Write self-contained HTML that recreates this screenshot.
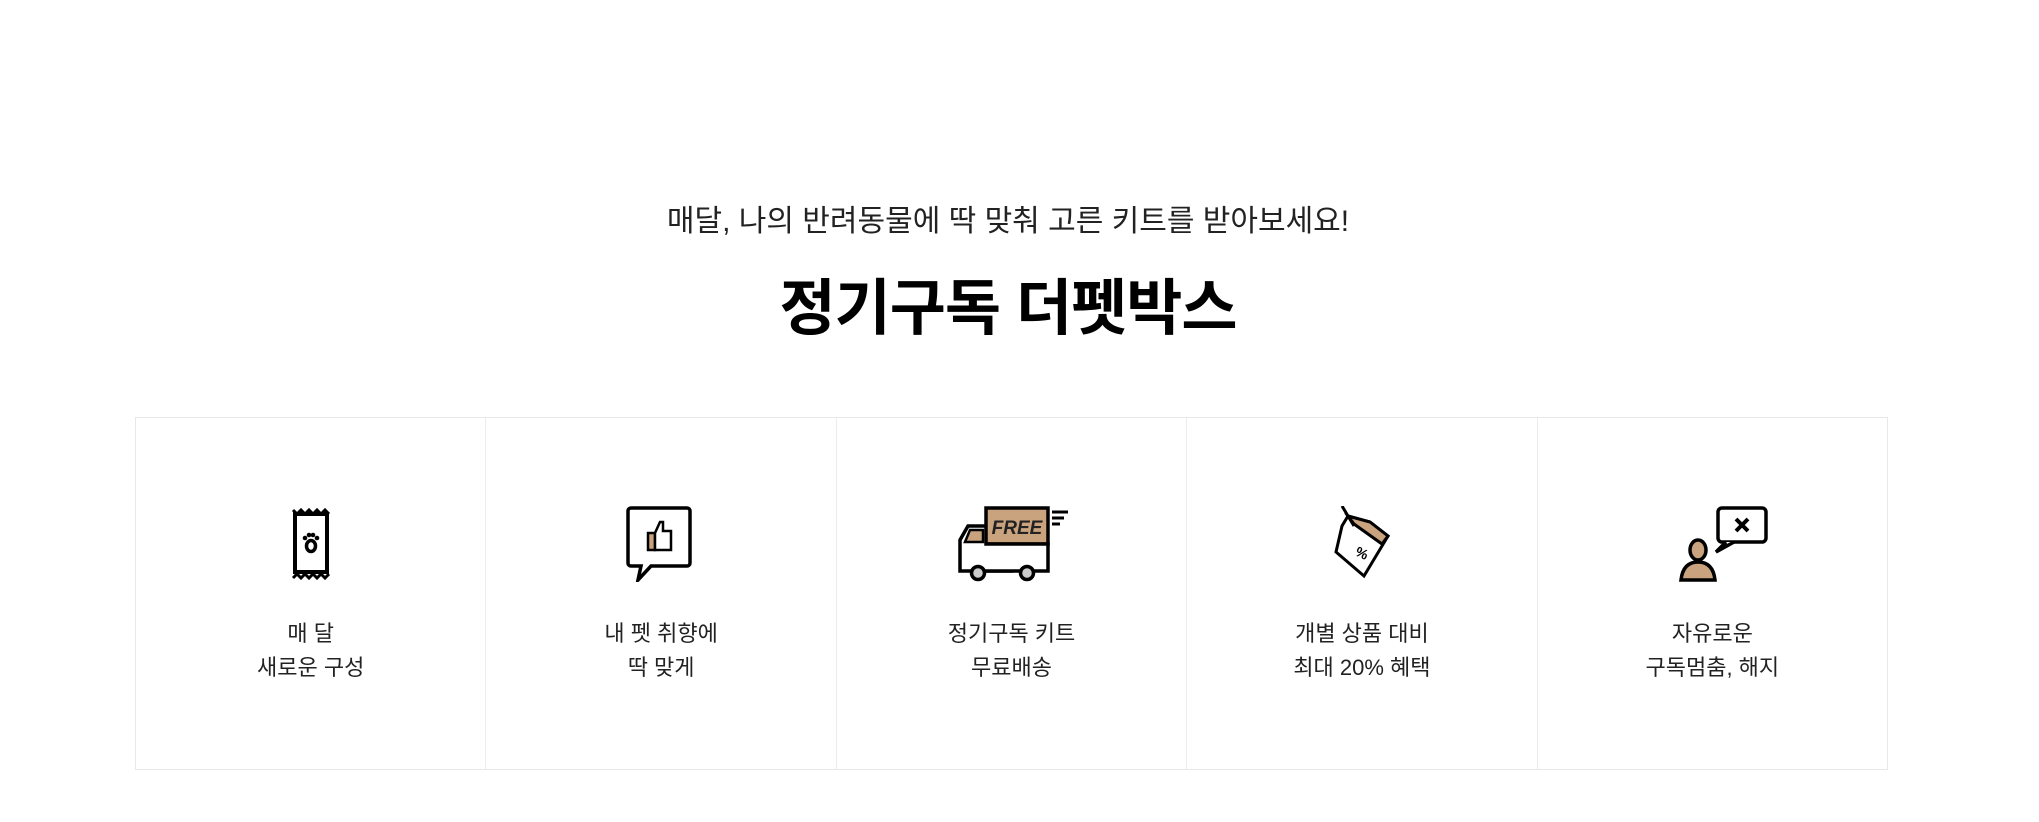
<!DOCTYPE html>
<html><head><meta charset="utf-8">
<style>
*{margin:0;padding:0;box-sizing:border-box}
body{width:2039px;height:822px;background:#fff;font-family:"Liberation Sans","Noto Sans CJK KR",sans-serif;color:#111;position:relative;overflow:hidden}
.sub{position:absolute;top:196px;left:0;width:2016px;text-align:center;font-size:30px;color:#222}
.title{position:absolute;top:258px;left:0;width:2016px;text-align:center;font-size:61px;font-weight:bold;color:#000;letter-spacing:-1px}
.box{position:absolute;left:135px;top:417px;width:1753px;height:353px;border:1.5px solid #e8e8e8;display:flex}
.col{flex:1;border-right:1.5px solid #ececec;position:relative}
.col:last-child{border-right:none}
.ic{position:absolute;left:50%;top:88px;transform:translateX(-50%);width:120px;height:76px}
.lb{position:absolute;top:199px;left:0;width:100%;text-align:center;font-size:22px;line-height:34px;color:#222}
</style></head><body>
<div class="sub">매달, 나의 반려동물에 딱 맞춰 고른 키트를 받아보세요!</div>
<div class="title">정기구독 더펫박스</div>
<div class="box">
<div class="col">
<svg class="ic" viewBox="0 0 120 76"><g fill="none" stroke="#000" stroke-width="4"><rect x="44" y="8" width="32" height="58"/><path d="M42 4 l4 4 4-4 4 4 4-4 4 4 4-4 4 4 4-4 4 4 M42 72 l4-4 4 4 4-4 4 4 4-4 4 4 4-4 4 4 4-4" stroke-width="3"/><ellipse cx="60" cy="40" rx="4.5" ry="5.5" stroke-width="3.5"/></g><circle cx="54" cy="32" r="2.3"/><circle cx="58" cy="29" r="2.3"/><circle cx="62" cy="29" r="2.3"/><circle cx="66" cy="32" r="2.3"/></svg>
<div class="lb">매 달<br>새로운 구성</div></div>
<div class="col">
<svg class="ic" viewBox="0 0 120 76"><path d="M30 2 h56 a3 3 0 0 1 3 3 v52 a3 3 0 0 1-3 3 H50 L37 74 L40 60 H30 a3 3 0 0 1-3-3 V5 a3 3 0 0 1 3-3z" fill="#fff" stroke="#000" stroke-width="3.5"/><rect x="47" y="27" width="7" height="17" fill="#c9a27e" stroke="#000" stroke-width="2.5"/><path d="M54 27 l5-11 h3 v9 h8 v19 h-16z" fill="#fff" stroke="#000" stroke-width="2.5"/></svg>
<div class="lb">내 펫 취향에<br>딱 맞게</div></div>
<div class="col">
<svg class="ic" viewBox="0 0 120 76"><path d="M30 20 h30 v45 H8 V34 l8-14z" fill="#fff" stroke="#000" stroke-width="3.5"/><path d="M13 36 l5-12 h13 v12z" fill="#c9a27e" stroke="#000" stroke-width="2.5"/><rect x="34" y="2" width="62" height="36" fill="#c9a27e" stroke="#000" stroke-width="3.5"/><path d="M34 38 h62 v27 H34" fill="#fff" stroke="#000" stroke-width="3.5"/><text x="65" y="28" text-anchor="middle" font-family="Liberation Sans" font-weight="bold" font-style="italic" font-size="19" fill="#222">FREE</text><path d="M100 6 h16 M100 12 h12 M100 18 h8" stroke="#000" stroke-width="3"/><circle cx="26" cy="67" r="6.5" fill="#ccc" stroke="#000" stroke-width="3.5"/><circle cx="75" cy="67" r="6.5" fill="#ccc" stroke="#000" stroke-width="3.5"/></svg>
<div class="lb">정기구독 키트<br>무료배송</div></div>
<div class="col">
<svg class="ic" viewBox="0 0 120 76"><path d="M46 10 l22 6 l18 14 l-24 40 l-28-24 l6-26z" fill="#fff" stroke="#000" stroke-width="3"/><path d="M46 10 l22 6 l18 14 l-6 8 l-28-20z" fill="#c9a27e" stroke="#000" stroke-width="3"/><path d="M40 0 l12 20" stroke="#000" stroke-width="3"/><text x="60" y="52" text-anchor="middle" font-family="Liberation Sans" font-weight="bold" font-size="14" transform="rotate(25 60 47)">%</text></svg>
<div class="lb">개별 상품 대비<br>최대 20% 혜택</div></div>
<div class="col">
<svg class="ic" viewBox="0 0 120 76"><rect x="66" y="2" width="48" height="34" rx="4" fill="#fff" stroke="#000" stroke-width="3.5"/><path d="M74 36 l-10 10 l18-10" fill="#fff" stroke="#000" stroke-width="3.5"/><path d="M84 13 l12 12 M96 13 l-12 12" stroke="#000" stroke-width="4"/><ellipse cx="46" cy="44" rx="8" ry="10" fill="#c9a27e" stroke="#000" stroke-width="3.5"/><path d="M29 74 q2-18 17-18 q15 0 17 18z" fill="#c9a27e" stroke="#000" stroke-width="3.5"/></svg>
<div class="lb">자유로운<br>구독멈춤, 해지</div></div>
</div>
</body></html>
